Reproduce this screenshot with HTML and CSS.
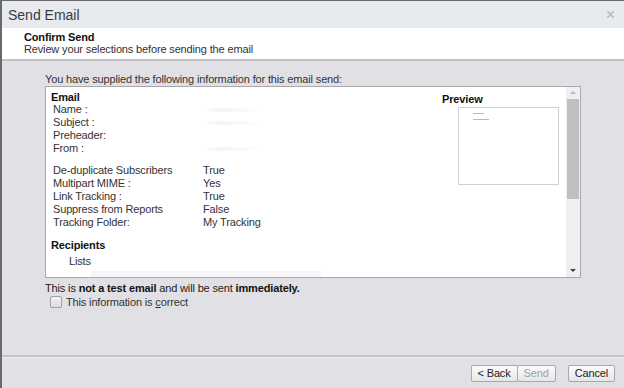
FILE: index.html
```html
<!doctype html>
<html lang="en">

<head>
  <meta charset="utf-8" />
  <title>Send Email</title>
  <link rel="stylesheet" href="styles.css">
</head>

<body>
  <div class="dialog">
    <div class="titlebar">
      <span class="title">Send Email</span>
      <span class="close">&times;</span>
    </div>

    <div class="header">
      <div class="header-title">Confirm Send</div>
      <div class="header-sub">Review your selections before sending the email</div>
    </div>

    <div class="body">
      <div class="intro">You have supplied the following information for this email send:</div>

      <div class="summary">
        <div class="summary-content">
          <div class="details">
            <div class="section-title">Email</div>
            <div class="row"><span class="label">Name :</span><span class="value blur">&nbsp;</span></div>
            <div class="row"><span class="label">Subject :</span><span class="value blur">&nbsp;</span></div>
            <div class="row"><span class="label">Preheader:</span><span class="value"></span></div>
            <div class="row"><span class="label">From :</span><span class="value blur">&nbsp;</span></div>

            <div class="options">
              <div class="row"><span class="label">De-duplicate Subscribers</span><span class="value">True</span></div>
              <div class="row"><span class="label">Multipart MIME :</span><span class="value">Yes</span></div>
              <div class="row"><span class="label">Link Tracking :</span><span class="value">True</span></div>
              <div class="row"><span class="label">Suppress from Reports</span><span class="value">False</span></div>
              <div class="row"><span class="label">Tracking Folder:</span><span class="value">My Tracking</span></div>
            </div>

            <div class="section-title recipients">Recipients</div>
            <div class="list-item">Lists</div>
            <div class="list-faint">&nbsp;</div>
          </div>

          <div class="preview">
            <div class="section-title">Preview</div>
            <div class="preview-box">
              <span class="mini-line short"></span>
              <span class="mini-line"></span>
            </div>
          </div>
        </div>

        <div class="scrollbar">
          <div class="arrow up"></div>
          <div class="track"><div class="thumb"></div></div>
          <div class="arrow down"></div>
        </div>
      </div>

      <div class="notice">This is <b>not a test email</b> and will be sent <b>immediately.</b></div>
      <label class="confirm">
        <span class="checkbox"></span>
        <span>This information is <u>c</u>orrect</span>
      </label>
    </div>

    <div class="footer">
      <div class="btn-group">
        <button class="btn">&lt; Back</button>
        <button class="btn" disabled>Send</button>
      </div>
      <button class="btn">Cancel</button>
    </div>
  </div>
</body>

</html>
```

FILE: styles.css
```css
body {
  margin: 0;
  background: #e1e1e5;
  font-family: 'Liberation Sans', Arial, sans-serif;
  font-size: 11px;
  letter-spacing: -0.15px;
  color: #222;
}

.dialog {
  width: 624px;
  height: 388px;
  box-sizing: border-box;
  border-top: 1px solid #6a6a6a;
  border-left: 2px solid #6a6a6a;
  display: flex;
  flex-direction: column;
  background: #e1e1e5;
}

.titlebar {
  height: 27px;
  background: #e7ebef;
  display: flex;
  align-items: center;
  justify-content: space-between;
  padding: 0 9px 0 6px;
  letter-spacing: 0;
}

.title {
  font-size: 14px;
  color: #3a3a3a;
}

.close {
  font-size: 16px;
  color: #b0b4b8;
}

.header {
  background: #fff;
  padding: 3px 0 0 22px;
  border-bottom: 2px solid #c2c2c6;
  box-sizing: border-box;
  height: 33px;
}

.header-title {
  font-weight: bold;
  color: #111;
  line-height: 12px;
}

.header-sub {
  line-height: 13px;
  color: #333;
}

.body {
  flex: 1;
  padding: 11px 0 0 43px;
  border-bottom: 2px solid #c4c4c8;
}

.intro {
  line-height: 14px;
  color: #333;
}

.summary {
  width: 536px;
  height: 192px;
  box-sizing: border-box;
  border: 1px solid #a9a9ad;
  background: #fff;
  display: flex;
  overflow: hidden;
}

.summary-content {
  flex: 1;
  display: flex;
  padding: 4px 0 0 5px;
}

.details {
  flex: 1;
}

.section-title {
  font-weight: bold;
  color: #111;
  line-height: 12px;
}

.row {
  display: flex;
  line-height: 13px;
  color: #333;
}

.label {
  width: 150px;
  padding-left: 2px;
}

.value.blur {
  width: 60px;
  background: linear-gradient(90deg, #fff, #f4f4f6 30%, #fff);
  height: 4px;
  margin-top: 5px;
}

.options {
  margin-top: 9px;
}

.recipients {
  margin-top: 9px;
  line-height: 15px;
}

.list-item {
  padding-left: 18px;
  line-height: 16px;
  color: #333;
}

.list-faint {
  margin: 2px 0 0 40px;
  width: 230px;
  height: 6px;
  background: #f6f6f8;
}

.preview {
  width: 124px;
  padding-top: 2px;
}

.preview-box {
  margin: 2px 0 0 16px;
  width: 101px;
  height: 78px;
  box-sizing: border-box;
  border: 1px solid #d0d0d4;
  padding: 5px 0 0 14px;
  display: flex;
  flex-direction: column;
  gap: 5px;
}

.mini-line {
  width: 16px;
  height: 1px;
  background: #b8b8bc;
}

.mini-line.short {
  width: 11px;
}

.scrollbar {
  width: 14px;
  background: #efeff1;
  display: flex;
  flex-direction: column;
  align-items: center;
}

.arrow {
  height: 12px;
  width: 100%;
  position: relative;
}

.arrow::after {
  content: '';
  position: absolute;
  left: 4px;
  border-left: 3px solid transparent;
  border-right: 3px solid transparent;
}

.arrow.up::after {
  top: 4px;
  border-bottom: 3px solid #b8b8bc;
}

.arrow.down::after {
  top: 4px;
  border-top: 3px solid #444;
}

.track {
  flex: 1;
  width: 100%;
}

.thumb {
  width: 12px;
  margin-left: 1px;
  height: 100px;
  background: #bfbfc2;
}

.notice {
  margin-top: 4px;
  line-height: 13px;
  color: #222;
}

.notice b {
  color: #111;
}

.confirm {
  display: flex;
  align-items: center;
  gap: 4px;
  margin: 1px 0 0 5px;
  color: #333;
}

.checkbox {
  width: 10px;
  height: 10px;
  border: 1px solid #a0a0a4;
  border-radius: 2px;
  background: linear-gradient(#f4f4f6, #dcdce0);
}

.footer {
  height: 30px;
  display: flex;
  align-items: center;
  justify-content: flex-end;
  gap: 12px;
  padding-right: 9px;
  border-top: 1px solid #f0f0f2;
}

.btn-group {
  display: flex;
}

.btn {
  font-family: 'Liberation Sans', Arial, sans-serif;
  font-size: 11px;
  letter-spacing: -0.15px;
  height: 17px;
  min-width: 38px;
  margin: 0;
  padding: 0 6px;
  border: 1px solid #a8a8ac;
  border-radius: 2px;
  background: linear-gradient(#fbfbfb, #e6e6e8);
  color: #222;
}

.btn-group .btn + .btn {
  margin-left: -1px;
}

.btn:disabled {
  color: #a0a0a4;
}
```
